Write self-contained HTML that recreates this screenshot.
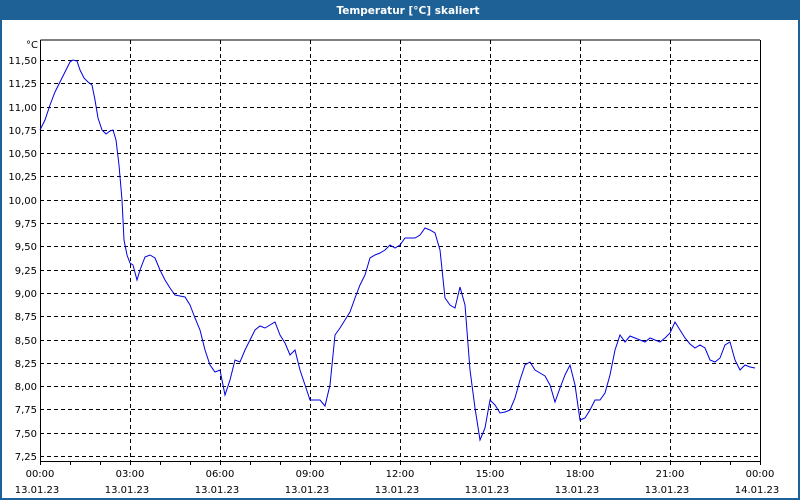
<!DOCTYPE html>
<html><head><meta charset="utf-8"><style>
html,body{margin:0;padding:0;width:800px;height:500px;overflow:hidden;background:#fff}
svg{display:block}
text{font-family:"DejaVu Sans","Liberation Sans",sans-serif;font-size:10px;fill:#000}
</style></head><body>
<svg width="800" height="500" viewBox="0 0 800 500" xmlns="http://www.w3.org/2000/svg">
<rect x="0" y="0" width="800" height="500" fill="#1e6196"/>
<rect x="2" y="20" width="796" height="478" fill="#fff"/>
<text x="408" y="14" text-anchor="middle" style="font-weight:bold;fill:#fff;font-size:10.5px">Temperatur [°C] skaliert</text>
<g stroke="#000" stroke-width="1" stroke-dasharray="4,3" fill="none" shape-rendering="crispEdges">
<path d="M40 60.5H760M40 83.5H760M40 107.5H760M40 130.5H760M40 153.5H760M40 176.5H760M40 200.5H760M40 223.5H760M40 246.5H760M40 270.5H760M40 293.5H760M40 316.5H760M40 340.5H760M40 363.5H760M40 386.5H760M40 409.5H760M40 433.5H760M40 456.5H760"/>
<path d="M130.5 40V461M220.5 40V461M310.5 40V461M400.5 40V461M490.5 40V461M580.5 40V461M670.5 40V461"/>
</g>
<g stroke="#000" stroke-width="1" fill="none" shape-rendering="crispEdges">
<path d="M40.5 40V461.5H760.5V40"/>
<path d="M40.5 40H760"/>
<path d="M70.5 461V465M100.5 461V465M130.5 461V465M160.5 461V465M190.5 461V465M220.5 461V465M250.5 461V465M280.5 461V465M310.5 461V465M340.5 461V465M370.5 461V465M400.5 461V465M430.5 461V465M460.5 461V465M490.5 461V465M520.5 461V465M550.5 461V465M580.5 461V465M610.5 461V465M640.5 461V465M670.5 461V465M700.5 461V465M730.5 461V465M760.5 461V465M40.5 461V465"/>
</g>
<polyline fill="none" stroke="#0000e0" stroke-width="1" points="40,130 45,120 50,105 55,92 60,82 65,72 70,62 73,60 77,61 80,70 84,78 88,82 92,85 95,100 98,118 102,130 106,134 110,131 113,130 116,140 119,165 122,200 124,240 127,255 130,263 133,265 137,280 140,270 145,257 150,255 155,258 160,270 165,280 170,288 175,295 180,296 185,297 190,305 195,318 200,330 205,350 210,365 215,372 220,370 225,395 230,380 235,360 240,362 245,350 250,340 255,330 260,326 265,328 270,325 275,322 280,335 285,343 290,355 295,350 300,370 305,385 310,400 315,400 320,400 325,406 330,385 335,335 340,328 345,320 350,312 355,298 360,285 365,275 370,258 375,255 380,253 385,250 390,245 395,248 400,245 405,238 410,238 415,238 420,235 425,228 430,230 435,233 440,250 445,298 450,305 455,308 460,287 465,305 470,370 475,408 480,440 485,428 490,400 495,405 500,413 505,412 510,410 515,398 520,380 525,365 530,362 535,370 540,373 545,376 550,385 555,402 560,388 565,375 570,365 575,385 580,420 585,418 590,410 595,400 600,400 605,393 610,375 615,350 620,335 625,342 630,336 635,338 640,340 645,342 650,338 655,340 660,342 665,338 670,333 675,322 680,330 685,338 690,344 695,348 700,345 705,348 710,360 715,362 720,358 725,345 730,342 735,360 740,370 745,365 750,367 755,368"/>
<g text-anchor="end">
<text x="38" y="48">°C</text>
<text x="37" y="64">11,50</text><text x="37" y="87">11,25</text><text x="37" y="111">11,00</text><text x="37" y="134">10,75</text><text x="37" y="157">10,50</text><text x="37" y="180">10,25</text><text x="37" y="204">10,00</text><text x="37" y="227">9,75</text><text x="37" y="250">9,50</text><text x="37" y="274">9,25</text><text x="37" y="297">9,00</text><text x="37" y="320">8,75</text><text x="37" y="344">8,50</text><text x="37" y="367">8,25</text><text x="37" y="390">8,00</text><text x="37" y="413">7,75</text><text x="37" y="437">7,50</text><text x="37" y="460">7,25</text>
</g>
<g text-anchor="middle">
<text x="40" y="477">00:00</text><text x="130" y="477">03:00</text><text x="220" y="477">06:00</text><text x="310" y="477">09:00</text><text x="400" y="477">12:00</text><text x="490" y="477">15:00</text><text x="580" y="477">18:00</text><text x="670" y="477">21:00</text><text x="760" y="477">00:00</text>
<text x="37" y="493">13.01.23</text><text x="127" y="493">13.01.23</text><text x="217" y="493">13.01.23</text><text x="307" y="493">13.01.23</text><text x="397" y="493">13.01.23</text><text x="487" y="493">13.01.23</text><text x="577" y="493">13.01.23</text><text x="667" y="493">13.01.23</text><text x="757" y="493">14.01.23</text>
</g>
</svg>
</body></html>
